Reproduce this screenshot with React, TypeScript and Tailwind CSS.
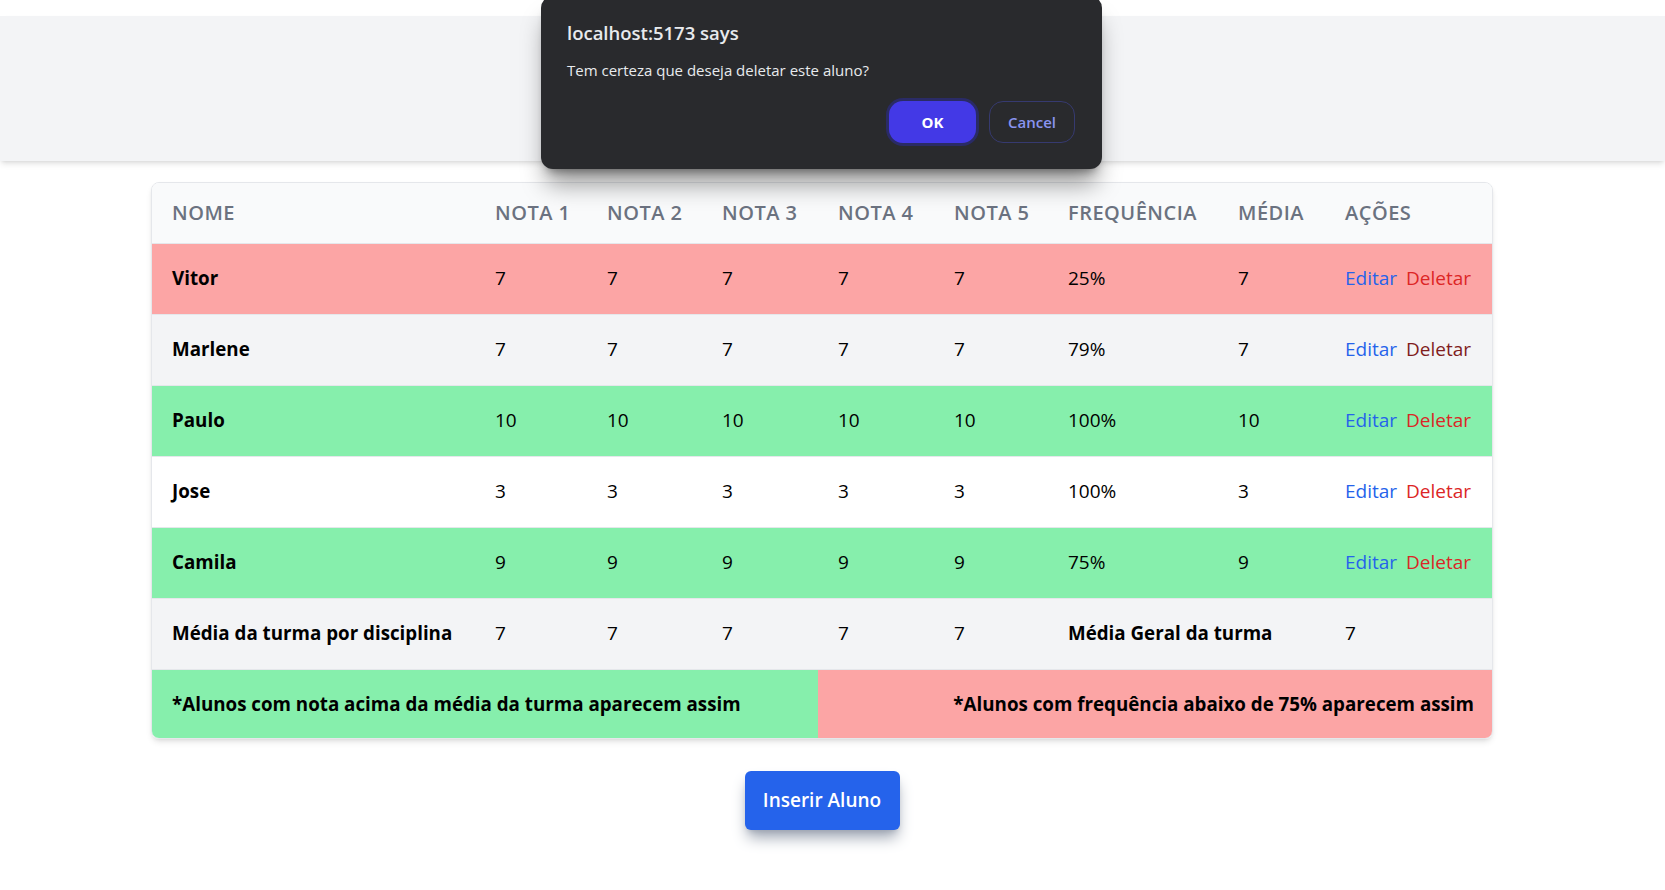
import React from "react";

type Aluno = {
  nome: string;
  notas: number[];
  frequencia: number;
  media: number;
  fundo: string;
};

const alunos: Aluno[] = [
  { nome: "Vitor", notas: [7, 7, 7, 7, 7], frequencia: 25, media: 7, fundo: "bg-[#fca5a5]" },
  { nome: "Marlene", notas: [7, 7, 7, 7, 7], frequencia: 79, media: 7, fundo: "bg-[#f3f4f6]" },
  { nome: "Paulo", notas: [10, 10, 10, 10, 10], frequencia: 100, media: 10, fundo: "bg-[#86efac]" },
  { nome: "Jose", notas: [3, 3, 3, 3, 3], frequencia: 100, media: 3, fundo: "bg-white" },
  { nome: "Camila", notas: [9, 9, 9, 9, 9], frequencia: 75, media: 9, fundo: "bg-[#86efac]" },
];

const colunas = ["Nome", "Nota 1", "Nota 2", "Nota 3", "Nota 4", "Nota 5", "Frequência", "Média", "Ações"];
const larguras = ["w-[323px]", "w-[112px]", "w-[115px]", "w-[116px]", "w-[116px]", "w-[114px]", "w-[170px]", "w-[107px]", "w-[169px]"];

export default function App() {
  return (
    <div className="relative min-h-[890px] bg-white font-['Open_Sans','Noto_Sans',sans-serif] text-black">
      {/* top band */}
      <div className="mt-4 h-[145px] bg-[#f3f4f6] shadow-md" />

      <div className="flex flex-col items-center pr-[21px]">
        <div className="mt-[21px] w-[1342px] overflow-hidden rounded-lg border border-[#e5e7eb] shadow-md">
          <table className="w-full table-fixed border-collapse text-[19px]">
            <colgroup>
              {larguras.map((w, i) => (
                <col key={i} className={w} />
              ))}
            </colgroup>
            <thead>
              <tr className="h-[60px] border-b border-[#e5e7eb] bg-[#f9fafb]">
                {colunas.map((c) => (
                  <th key={c} className="pl-5 text-left text-[20px] font-semibold uppercase tracking-wide text-[#6b7280]">
                    {c}
                  </th>
                ))}
              </tr>
            </thead>
            <tbody className="divide-y divide-[#e5e7eb]">
              {alunos.map((a) => (
                <tr key={a.nome} className={`h-[71px] ${a.fundo}`}>
                  <td className="pl-5 text-[18.75px] font-bold">{a.nome}</td>
                  {a.notas.map((n, j) => (
                    <td key={j} className="pl-5">
                      {n}
                    </td>
                  ))}
                  <td className="pl-5">{a.frequencia}%</td>
                  <td className="pl-5">{a.media}</td>
                  <td className="whitespace-nowrap pl-5">
                    <span className="mr-[9px] text-[#2563eb]">Editar</span>
                    <span className={a.nome === "Marlene" ? "text-[#7f1d1d]" : "text-[#dc2626]"}>Deletar</span>
                  </td>
                </tr>
              ))}
              <tr className="h-[71px] bg-[#f3f4f6]">
                <td className="whitespace-nowrap pl-5 text-[18.75px] font-bold">Média da turma por disciplina</td>
                {[7, 7, 7, 7, 7].map((n, j) => (
                  <td key={j} className="pl-5">
                    {n}
                  </td>
                ))}
                <td colSpan={2} className="pl-5 text-[18.75px] font-bold">
                  Média Geral da turma
                </td>
                <td className="pl-5">7</td>
              </tr>
              <tr className="h-[69px]">
                <td colSpan={4} className="whitespace-nowrap bg-[#86efac] pl-5 text-[18.75px] font-bold">
                  *Alunos com nota acima da média da turma aparecem assim
                </td>
                <td colSpan={5} className="whitespace-nowrap bg-[#fca5a5] pr-5 text-right text-[18.75px] font-bold">
                  *Alunos com frequência abaixo de 75% aparecem assim
                </td>
              </tr>
            </tbody>
          </table>
        </div>

        <button className="mt-8 h-[59px] w-[155px] rounded-md bg-[#2563eb] text-[19px] font-semibold text-white shadow-lg shadow-gray-400">
          Inserir Aluno
        </button>
      </div>

      {/* browser confirm dialog */}
      <div className="absolute left-[541px] top-[-20px] h-[173px] w-[561px] rounded-xl bg-[#292a2d] shadow-xl shadow-black/40">
        <div className="pl-[26px] pt-[23px] text-[18.5px] font-semibold text-[#e8eaed]">localhost:5173 says</div>
        <div className="pl-[26px] pt-[12px] text-[15px] text-[#e8eaed]">Tem certeza que deseja deletar este aluno?</div>
        <div className="mt-[20px] flex justify-end gap-[13px] pr-[27px]">
          <button className="h-[42px] w-[87px] rounded-[14px] bg-[#4339e6] text-[15px] font-bold text-white ring-[3px] ring-[#2a2b66]">
            OK
          </button>
          <button className="h-[42px] w-[86px] rounded-[14px] border border-[#363a70] text-[15px] font-semibold text-[#8a94f0]">
            Cancel
          </button>
        </div>
      </div>
    </div>
  );
}
